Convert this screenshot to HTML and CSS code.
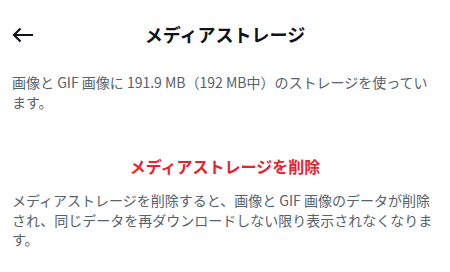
FILE: index.html
```html
<!DOCTYPE html>
<html lang="ja">
<head>
<meta charset="utf-8">
<link rel="stylesheet" href="styles.css">
</head>
<body>
<div class="page">
  <header class="header">
    <div class="back">
      <svg width="24" height="16" viewBox="0 0 24 16" aria-hidden="true">
        <path d="M3 8H22M9.5 1.5L3 8L9.5 14.5" fill="none" stroke="#0f1419" stroke-width="2.2" stroke-linecap="butt" stroke-linejoin="miter"/>
      </svg>
    </div>
    <h1 class="title">メディアストレージ</h1>
    <div></div>
  </header>
  <p class="text usage">画像と GIF 画像に 191.9 MB（192 MB中）のストレージを使っています。</p>
  <div class="action">メディアストレージを削除</div>
  <p class="text note">メディアストレージを削除すると、画像と GIF 画像のデータが削除され、同じデータを再ダウンロードしない限り表示されなくなります。</p>
</div>
</body>
</html>
```
FILE: styles.css
```css
html, body {
  margin: 0;
  padding: 0;
  background: #ffffff;
}
body {
  font-family: "Noto Sans CJK JP", "Noto Sans", sans-serif;
  width: 450px;
  height: 272px;
  overflow: hidden;
}
.page {
  display: flex;
  flex-direction: column;
}
.header {
  display: grid;
  grid-template-columns: 1fr auto 1fr;
  align-items: center;
  height: 68px;
}
.back {
  justify-self: start;
  display: flex;
  padding-left: 11px;
  padding-top: 2px;
}
.title {
  margin: 0;
  font-size: 18px;
  font-weight: 700;
  color: #0f1419;
  line-height: 24px;
}
.text {
  margin: 0;
  padding: 0 12px;
  font-size: 14px;
  line-height: 19.5px;
  color: #56626c;
}
.usage {
  padding-top: 5px;
}
.action {
  margin-top: 44px;
  text-align: center;
  font-size: 16px;
  font-weight: 700;
  line-height: 20px;
  color: #e8232f;
}
.note {
  margin-top: 15px;
}
```
